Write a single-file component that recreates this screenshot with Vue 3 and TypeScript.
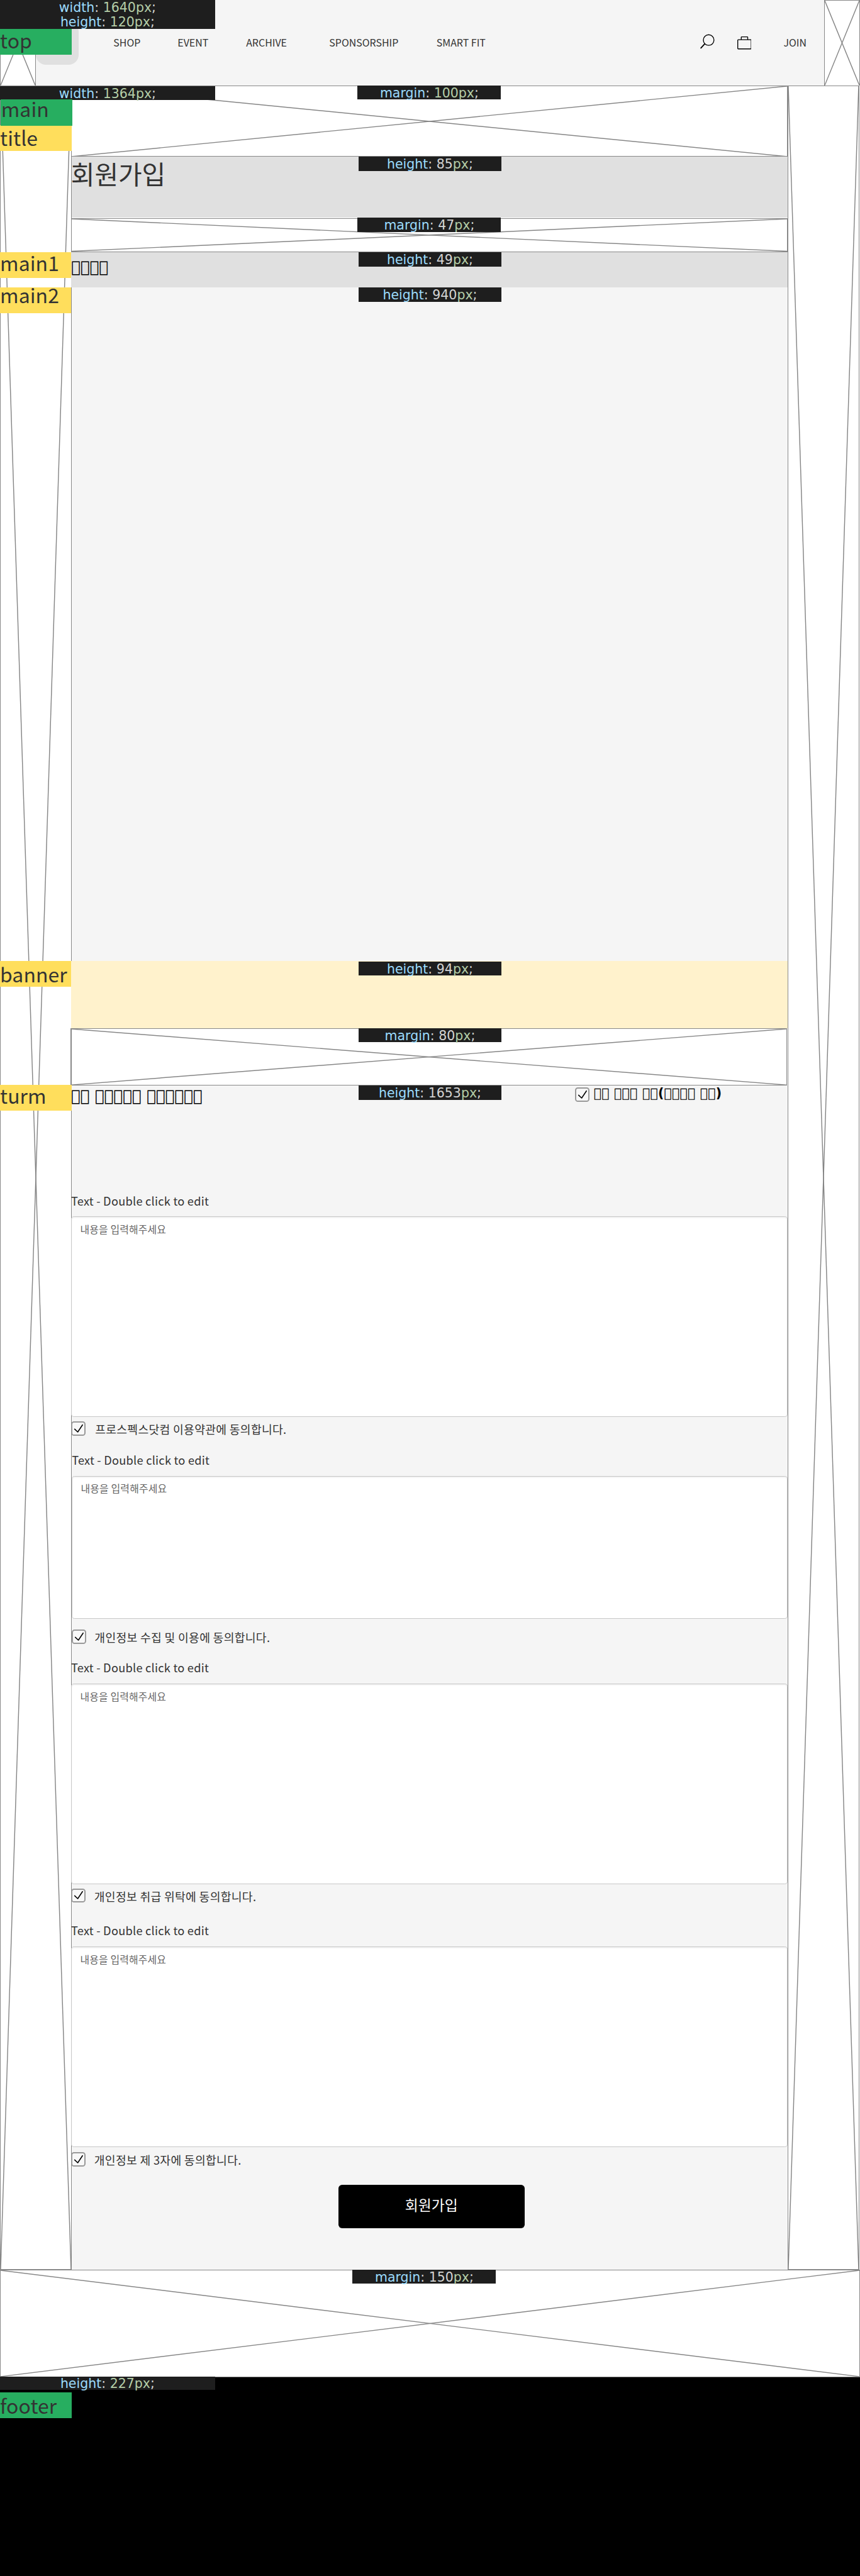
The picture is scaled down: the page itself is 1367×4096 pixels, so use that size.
<script setup lang="ts">
import { h } from 'vue'

interface NavItem { label: string; width: number }
interface Term { agree: string; inset: number; height: number; gap: number; after: number; box: number; text: number }

// Crossed box that marks an empty margin area
const Cross = () =>
  h('svg', { class: 'cross', 'aria-hidden': 'true' }, [
    h('line', { x1: '0', y1: '0', x2: '100%', y2: '100%', stroke: '#858585', 'stroke-width': '1.25' }),
    h('line', { x1: '100%', y1: '0', x2: '0', y2: '100%', stroke: '#858585', 'stroke-width': '1.25' }),
  ])

const nav: NavItem[] = [
  { label: 'SHOP', width: 89.5 },
  { label: 'EVENT', width: 95.6 },
  { label: 'ARCHIVE', width: 116 },
  { label: 'SPONSORSHIP', width: 149.6 },
  { label: 'SMART FIT', width: 90 },
]

const terms: Term[] = [
  { agree: '프로스펙스닷컴 이용약관에 동의합니다.', inset: -1, height: 280, gap: 6, after: 24, box: 0.5, text: 13.2 },
  { agree: '개인정보 수집 및 이용에 동의합니다.', inset: 0, height: 200, gap: 15, after: 23, box: 0, text: 12 },
  { agree: '개인정보 취급 위탁에 동의합니다.', inset: -1, height: 280, gap: 6, after: 29, box: 0, text: 12.5 },
  { agree: '개인정보 제 3자에 동의합니다.', inset: -1, height: 280, gap: 7, after: 0, box: 0, text: 12.5 },
]

// Characters without a glyph, shown as empty boxes
const blank = (n: number): string => '\u{F0000}'.repeat(n)
const mainHeading = blank(4)
const termHeading = [blank(2), blank(5), blank(6)].join(' ')
const agreeAll = `${blank(2)} ${blank(3)} ${blank(2)}(${blank(4)} ${blank(2)})`
</script>

<template>
  <div class="page">
    <header class="top">
      <Cross class="top-side" />
      <div class="bar">
        <div class="logo"></div>
        <nav class="nav">
          <a v-for="n in nav" :key="n.label" :style="{ width: n.width + 'px' }">{{ n.label }}</a>
        </nav>
        <div class="tools">
          <svg class="search" viewBox="0 0 20 31" fill="none" stroke="#000">
            <circle cx="11.8" cy="8.5" r="7.4" stroke-width="1.2" />
            <path d="M6.2 14 L1 19.6" stroke-width="1.6" stroke-linecap="round" />
          </svg>
          <svg class="bag" viewBox="0 0 20 18" fill="none" stroke="#000" stroke-width="1.2">
            <rect x=".6" y="4.5" width="18.8" height="12.8" rx=".8" />
            <path d="M5.5 4.4 V1.2 Q5.5 .6 6.1 .6 H13.9 Q14.5 .6 14.5 1.2 V4.4" />
          </svg>
          <a class="join">JOIN</a>
        </div>
      </div>
      <Cross class="top-side" />
      <div class="note wide two"><span><b>width</b>: <i>1640px</i>;</span><span><b>height</b>: <i>120px</i>;</span></div>
      <div class="tag green tag-top">top</div>
    </header>

    <main class="main">
      <div class="side"><Cross class="fill" /></div>
      <div class="center">
        <section class="block m100">
          <Cross class="fill" />
          <div class="note n-left"><span><b>margin</b>: <i>100px</i>;</span></div>
        </section>
        <section class="block title">
          <h1>회원가입</h1>
          <div class="note"><span><b>height</b>: 85<i>px</i>;</span></div>
        </section>
        <section class="block m47">
          <Cross class="fill" />
          <div class="note n-left n-up"><span><b>margin</b>: 47<i>px</i>;</span></div>
        </section>
        <section class="block main1">
          <h2>{{ mainHeading }}</h2>
          <div class="note n-main1"><span><b>height</b>: 49<i>px</i>;</span></div>
          <div class="tag yellow narrow tag-main1">main1</div>
        </section>
        <section class="block main2">
          <div class="note"><span><b>height</b>: 940<i>px</i>;</span></div>
          <div class="tag yellow narrow tag-main2">main2</div>
        </section>
        <section class="block banner">
          <div class="note n-banner"><span><b>height</b>: 94<i>px</i>;</span></div>
          <div class="tag yellow narrow tag-banner">banner</div>
        </section>
        <section class="block m80">
          <Cross class="fill" />
          <div class="note n-m80"><span><b>margin</b>: 80<i>px</i>;</span></div>
        </section>
        <section class="block turm">
          <div class="turm-head">
            <h2>{{ termHeading }}</h2>
            <label class="all">
              <span class="check"><svg viewBox="0 0 20 20"><path d="M5 10.8 L9.3 14.9 L15.9 5" /></svg></span>
              <strong>{{ agreeAll }}</strong>
            </label>
          </div>
          <div v-for="t in terms" :key="t.agree" class="term" :style="{ marginBottom: t.after + 'px' }">
            <div class="term-title" :style="{ marginLeft: t.inset + 0.2 + 'px' }">Text - Double click to edit</div>
            <div class="area" :style="{ marginLeft: t.inset + 'px', height: t.height + 'px' }">내용을 입력해주세요</div>
            <label class="agree" :style="{ marginTop: t.gap + 'px', marginLeft: t.inset + t.box + 'px' }">
              <span class="check"><svg viewBox="0 0 20 20"><path d="M5 10.8 L9.3 14.9 L15.9 5" /></svg></span>
              <span class="agree-text" :style="{ marginLeft: t.text + 'px' }">{{ t.agree }}</span>
            </label>
          </div>
          <button class="submit" type="button">회원가입</button>
          <div class="note"><span><b>height</b>: 1653<i>px</i>;</span></div>
          <div class="tag yellow tag-turm">turm</div>
        </section>
      </div>
      <div class="side"><Cross class="fill" /></div>
      <div class="note wide n-main"><span><b>width</b>: <i>1364px</i>;</span></div>
      <div class="tag yellow tag-title">title</div>
      <div class="tag green tag-main">main</div>
    </main>

    <section class="m150">
      <Cross class="fill" />
      <div class="note n-m150"><span><b>margin</b>: 150<i>px</i>;</span></div>
    </section>

    <footer class="footer">
      <div class="note wide n-footer"><span><b>height</b>: <i>227px</i>;</span></div>
      <div class="tag green tag-footer">footer</div>
    </footer>
  </div>
</template>

<style>
body { margin: 0; background: #fff; }
</style>

<style scoped>
.page {
  zoom: 1.13917;
  width: 1200px;
  height: 3595.6px;
  overflow: hidden;
  display: flex;
  flex-direction: column;
  background: #fff;
  color: #333;
  font-family: "Noto Sans CJK KR", sans-serif;
}
.page * { box-sizing: border-box; }
.cross { display: block; border: 1px solid #888; }
.fill { width: 100%; height: 100%; }

.top { position: relative; flex: none; display: flex; height: 119px; }
.top-side { flex: none; width: 50px; height: 119px; border-bottom: 0; }
.bar { flex: 1; display: flex; align-items: center; height: 120px; background: #f5f5f5; }
.logo { width: 60px; height: 60px; border-radius: 14px; background: #e0e0e0; }
.nav { display: flex; margin-left: 48.3px; margin-top: -.6px; }
.nav a, .join { font-size: 14px; line-height: 20px; white-space: nowrap; }
.tools { display: flex; align-items: flex-start; margin-left: auto; width: 173px; height: 24px; }
.search { flex: none; width: 20px; height: 31px; margin-top: -.5px; }
.bag { flex: none; width: 20px; height: 18px; margin: 3px 0 0 31.5px; }
.join { margin: 1.7px 0 0 44.8px; }

.main { position: relative; flex: none; display: flex; height: 3049px; }
.side { flex: none; width: 100px; height: 3049px; }
.center { flex: none; width: 999px; }
.block { position: relative; }
.m100 { height: 100px; width: 1000px; margin-left: -1px; }
.title { height: 85px; background: #e0e0e0; margin-bottom: 1px; }
.title h1 { margin: 0 0 0 -1px; font-size: 36px; font-weight: 400; line-height: 46px; letter-spacing: -.1px; }
.m47 { height: 47px; width: 1000px; margin-left: -1px; }
.main1 { height: 49px; width: 1000px; margin-left: -1px; background: #e0e0e0; }
.main2 { height: 940px; background: #f5f5f5; }
.banner { height: 94px; width: 1000px; margin-left: -1px; background: #fff2cc; }
.m80 { height: 80px; width: 1000px; margin-left: -2px; }
.turm { height: 1653px; background: #f5f5f5; }
h2 {
  margin: 0;
  color: #000;
  font: 700 22px/26px "DejaVu Sans", sans-serif;
  letter-spacing: -.24px;
  white-space: nowrap;
}
.main1 h2 { padding: 8.3px 0 0 .5px; }
.turm-head { display: flex; justify-content: space-between; height: 151px; }
.turm-head h2 { padding-top: 2.3px; margin-left: -.8px; }
.all { display: flex; width: 296.5px; height: 20px; margin-top: 3px; }
.all strong { margin-left: 6px; color: #000; font: 700 18px/17.4px "DejaVu Sans", sans-serif; letter-spacing: .17px; white-space: nowrap; }
.check { flex: none; display: block; width: 20px; height: 20px; border: 2px solid #999; border-radius: 4px; background: #f8f8f8; }
.check svg { display: block; width: 20px; height: 20px; margin: -2px; }
.check path { fill: none; stroke: #000; stroke-width: 1.4; stroke-linecap: round; stroke-linejoin: round; }
.term-title { height: 20px; margin-bottom: 12px; font-size: 16px; line-height: 20px; letter-spacing: .21px; white-space: nowrap; }
.area {
  border: 1px solid #c8c8c8;
  border-radius: 4px;
  padding: 7.6px 12px;
  background: #fff;
  box-shadow: inset 0 1px 2px rgba(0, 0, 0, .08);
  color: #666;
  font-size: 14px;
  line-height: 20px;
  letter-spacing: .1px;
}
.agree { display: flex; height: 20px; }
.agree-text { font-size: 16px; line-height: 21.6px; letter-spacing: .27px; white-space: nowrap; }
.submit {
  display: block;
  width: 260px;
  height: 60px;
  margin: 26px 0 0 372px;
  padding: 0 0 4px;
  border: 0;
  border-radius: 5px;
  background: #000;
  color: #fff;
  font: 400 20px/54px "Noto Sans CJK KR", sans-serif;
}

.m150 { position: relative; flex: none; height: 150px; }
.footer { position: relative; flex: 1; background: #000; }

/* Size notes laid over each area */
.note {
  position: absolute;
  top: 0;
  left: 400px;
  width: 200px;
  background: #1e1e1e;
  color: #d4d4d4;
  font: 18px/20px "DejaVu Sans", sans-serif;
  text-align: center;
}
.note span { display: block; height: 20px; padding-top: .9px; }
.note b { font-weight: 400; color: #9cdcfe; }
.note i { font-style: normal; color: #b5cea8; }
.wide { left: 0; width: 300px; }
.n-up { top: -1px; }
.n-main1 { left: 401px; }
.n-banner { top: 1px; left: 401px; }
.n-m80 { left: 402px; }
.n-main { top: 1px; }
.n-m150 { left: 492px; }
.n-m150, .n-m150 span { height: 19px; }
.n-footer { top: -1px; }
.n-footer span { height: 19px; padding-top: 0; }

/* Area name tags in the left margin */
.tag {
  position: absolute;
  left: 0;
  width: 100px;
  height: 36px;
  color: #333;
  font-size: 28px;
  letter-spacing: .1px;
  white-space: nowrap;
}
.green { background: #27ae60; }
.yellow { background: #ffde5c; }
.narrow { width: 99px; }
.tag-top { top: 40px; line-height: 31.2px; }
.tag-title { top: 56px; line-height: 33.6px; }
.tag-main { top: 20px; left: 1px; height: 37px; line-height: 26px; padding-left: .5px; }
.tag-main1 { top: 0; left: -99px; line-height: 29.2px; }
.tag-main2 { top: 0; left: -100px; line-height: 19.6px; }
.tag-banner { top: 0; left: -99px; line-height: 35.2px; }
.tag-turm { top: -1px; left: -100px; line-height: 29.6px; }
.tag-footer { top: 21px; line-height: 35.2px; }
</style>
